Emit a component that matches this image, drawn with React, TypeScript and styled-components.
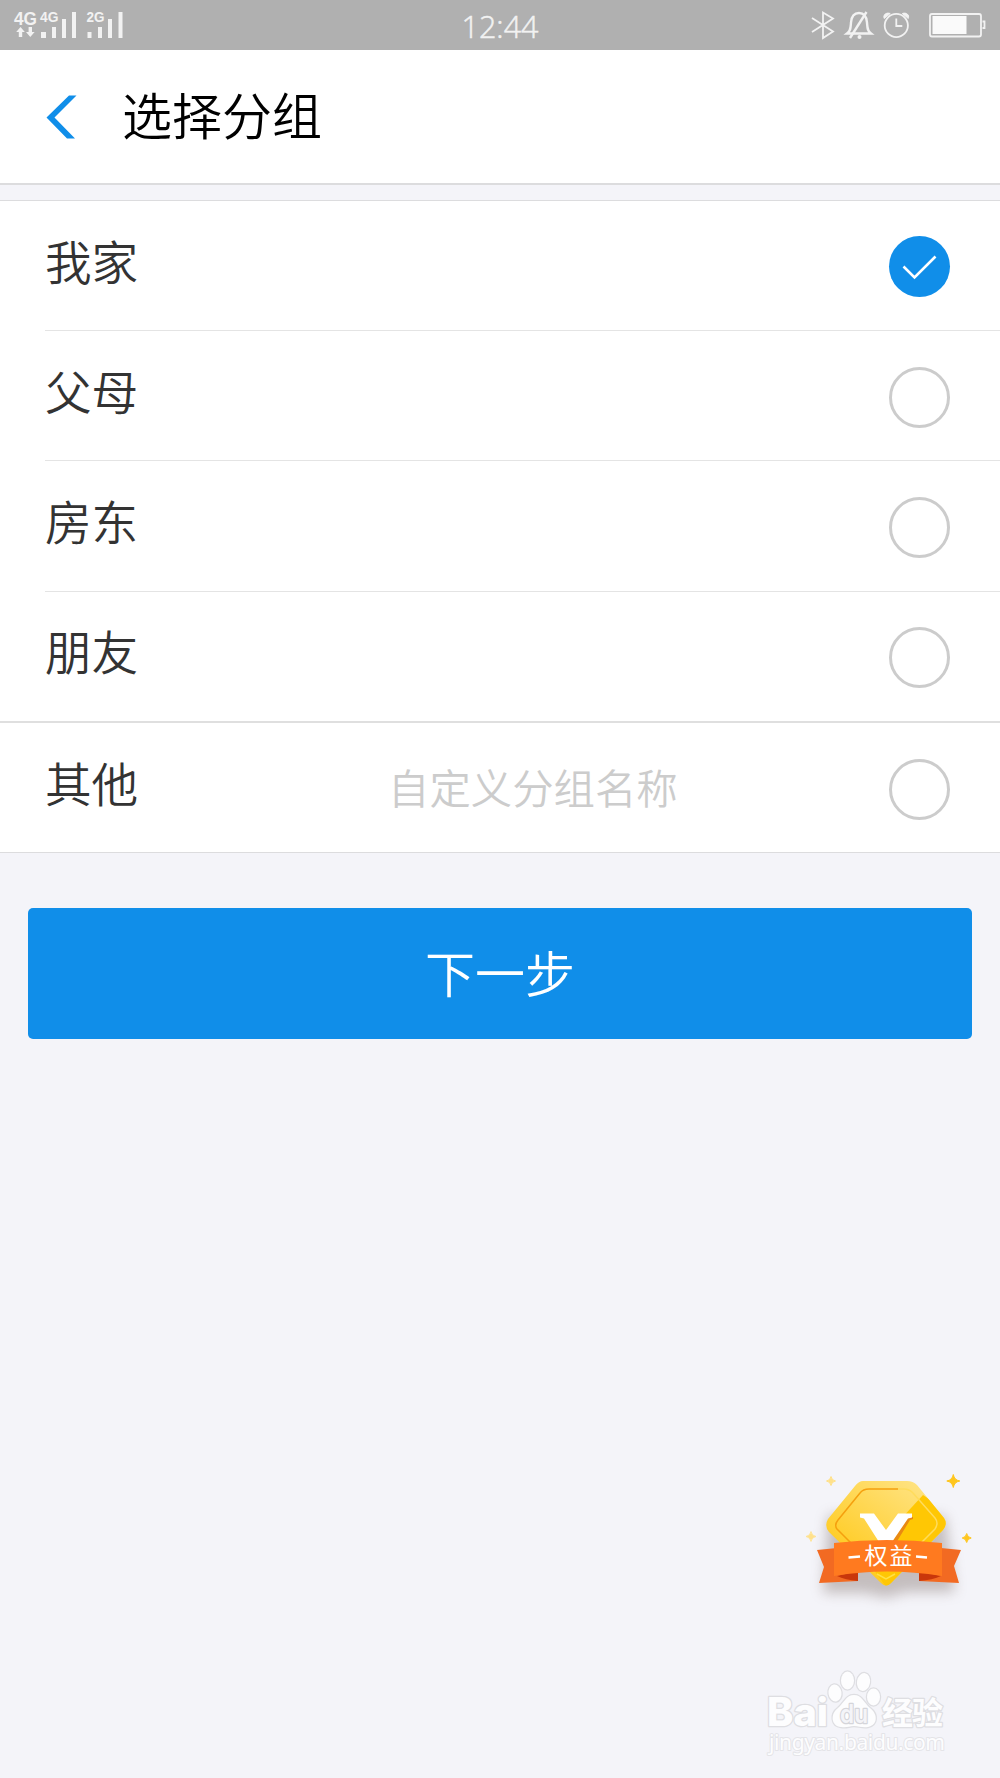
import React, { useState } from "react";
import styled, { createGlobalStyle } from "styled-components";

const BLUE = "#108ee9";
const PAGE = "#f4f4f9";
const CJK = '"Noto Sans CJK SC", "Noto Sans", sans-serif';

const GlobalStyle = createGlobalStyle`
  * { box-sizing: border-box; }
  body {
    margin: 0;
    background: ${PAGE};
    font-family: ${CJK};
    font-weight: 350;
  }
`;

const Screen = styled.div`
  position: relative;
  display: flex;
  flex-direction: column;
  width: 1000px;
  height: 1778px;
  overflow: hidden;
  background: ${PAGE};
`;

const StatusBar = styled.div`
  display: grid;
  grid-template-columns: 1fr auto 1fr;
  align-items: center;
  flex: none;
  height: 50px;
  background: #b0b0b0;
`;

const Clock = styled.time`
  font: 350 30.5px/50px "Open Sans", "Noto Sans", sans-serif;
  color: #f2f2f2;
  -webkit-text-stroke: 0.5px #f2f2f2;
  padding-top: 1px;
  height: 50px;
`;

const Icon = styled.svg<{ $end?: boolean }>`
  display: block;
  justify-self: ${(p) => (p.$end ? "end" : "start")};
`;

const Header = styled.header`
  display: flex;
  align-items: center;
  flex: none;
  height: 135px;
  padding: 0 0 0 46px;
  background: #fff;
  border-bottom: 2px solid #dcdcde;
`;

const BackButton = styled.button`
  flex: none;
  width: 76px;
  height: 60px;
  padding: 0;
  border: 0;
  background: none;
`;

const Title = styled.h1`
  margin: 0 0 7px;
  font-size: 50px;
  line-height: 70px;
  font-weight: 350;
  color: #000;
`;

const List = styled.ul`
  flex: none;
  margin: 15px 0 0;
  padding: 0;
  list-style: none;
  background: #fff;
  border-top: 1px solid #dcdcde;
  border-bottom: 1px solid #dcdcde;
`;

const Row = styled.li<{ $divider: "none" | "inset" | "full" }>`
  display: grid;
  grid-template-columns: 343px 1fr 61px;
  align-items: center;
  height: ${(p) => (p.$divider === "none" ? 129 : p.$divider === "full" ? 131 : 130.4)}px;
  margin-left: ${(p) => (p.$divider === "inset" ? 45 : 0)}px;
  padding: 0 50px 0 ${(p) => (p.$divider === "inset" ? 0 : 45)}px;
  border-top: ${(p) =>
    p.$divider === "none" ? "0" : p.$divider === "inset" ? "1px solid #e4e4e4" : "2px solid #dfdfdf"};
`;

const Label = styled.span`
  margin-bottom: 12px;
  font-size: 46.6px;
  line-height: 60px;
  color: #333;
`;

const NameInput = styled.input`
  width: 300px;
  height: 60px;
  margin-bottom: 4px;
  padding: 0;
  border: 0;
  outline: 0;
  background: none;
  font: 350 41.4px/60px ${CJK};
  &::placeholder { color: #ccc; opacity: 1; }
`;

const Radio = styled.button<{ $on: boolean }>`
  grid-column: 3;
  display: flex;
  width: 61px;
  height: 61px;
  margin-top: ${(p) => (p.$on ? 2 : 3)}px;
  padding: 0;
  border: ${(p) => (p.$on ? "0" : "3px solid #ccc")};
  border-radius: 50%;
  background: ${(p) => (p.$on ? BLUE : "#fff")};
`;

const NextButton = styled.button`
  flex: none;
  height: 131px;
  margin: 55px 28px 0;
  padding: 0 0 5px;
  border: 0;
  border-radius: 5px;
  background: ${BLUE};
  color: #fff;
  font: 350 50px/70px ${CJK};
`;

const FloatingBadge = styled.svg`
  position: absolute;
  left: 780px;
  top: 1450px;
`;

const Watermark = styled.svg`
  position: absolute;
  left: 750px;
  top: 1650px;
`;

function Signals() {
  return (
    <Icon width="140" height="50" fill="#f2f2f2" fontFamily="Liberation Sans" fontWeight="700">
      <text x="14" y="25" fontSize="18" textLength="23" lengthAdjust="spacingAndGlyphs">4G</text>
      <text x="40" y="22" fontSize="15" textLength="18.5" lengthAdjust="spacingAndGlyphs">4G</text>
      <text x="86.5" y="22" fontSize="15" textLength="18" lengthAdjust="spacingAndGlyphs">2G</text>
      <path d="M20.5 27l4.3 5h-2.6v5h-3.4v-5h-2.6zM30.3 37l-4.3-5h2.6v-5h3.4v5h2.6z" />
      <path d="M41 32h5v6h-5zM52 27h4v11h-4zM62 19h4v19h-4zM72 12h4v26h-4z" />
      <path d="M87.500 32h4v6h-4zM98 27h4v11h-4zM108 19h4v19h-4zM118.500 12h4v26h-4z" />
    </Icon>
  );
}

function StatusIcons() {
  return (
    <Icon $end width="200" height="50" fill="none" stroke="#f2f2f2" strokeWidth="1.8">
      <path d="M12 18l21 13.500-10 6.500V12.500l10 6L12 32" />
      <path d="M47 33.500h24c-4-3-3.500-6-4-11-.5-6-3.500-9.500-8-9.500s-7.500 3.500-8 9.500c-.5 5 0 8-4 11z" strokeWidth="2.4" />
      <path d="M50 38L66.500 12" strokeWidth="2.4" />
      <circle cx="59.500" cy="37" r="2" fill="#f2f2f2" stroke="none" />
      <circle cx="96.300" cy="25.500" r="11.600" />
      <path d="M96.300 18.500v7.500h6" />
      <path d="M84.200 18.500c-1.500-3.500 2-6.500 6-5zM108.300 18.500c1.500-3.500-2-6.500-6-5z" fill="#f2f2f2" strokeWidth="1" />
      <rect x="130" y="14" width="51" height="22.500" rx="2" />
      <rect x="132.500" y="16" width="34" height="18" fill="#fafafa" stroke="none" />
      <path d="M182.500 21.500h2v6.500h-2" />
    </Icon>
  );
}

const star = (x: number, y: number, r: number) =>
  `M${x} ${y - r}Q${x + r * 0.15} ${y - r * 0.15} ${x + r} ${y}Q${x + r * 0.15} ${y + r * 0.15} ${x} ${y + r}Q${x - r * 0.15} ${y + r * 0.15} ${x - r} ${y}Q${x - r * 0.15} ${y - r * 0.15} ${x} ${y - r}Z`;

function BenefitsBadge() {
  return (
    <FloatingBadge width="220" height="170">
      <defs>
        <linearGradient id="gold" x1="0" y1="1" x2="0.8" y2="0">
          <stop offset="0.25" stopColor="#ffca1c" />
          <stop offset="1" stopColor="#ffe58b" />
        </linearGradient>
        <filter id="soft" x="-20%" y="-20%" width="140%" height="150%">
          <feGaussianBlur stdDeviation="6.5" />
        </filter>
        <clipPath id="gem">
          <path d="M83 31H127Q133 31 137 35L164 68Q168 74 163 80L111 133Q106 138 101 133L49 82Q44 76 48 69L75 36Q79 31 83 31Z" />
        </clipPath>
      </defs>
      <path d="M48 65L165 66 175 142H126L106 148 85 143H43Z" fill="#776660" opacity=".38" filter="url(#soft)" />
      <g clipPath="url(#gem)">
        <path d="M40 25h132v120H40z" fill="url(#gold)" />
        <path d="M143 45L85 108l25 34L172 90V65z" fill="#ffc704" />
      </g>
      <path d="M73 95L57 79Q54 75 58 70L80 43Q83 39 89 39H118" fill="none" stroke="#f5a00e" strokeWidth="1.500" />
      <path d="M118 39H124Q129 39 133 43L155 68Q159 73 155 79L140 94" fill="none" stroke="#ffdc5c" strokeWidth="1.500" />
      <path d="M97 124l9 5 9-5" fill="none" stroke="#ffe047" strokeWidth="1.500" />
      <path d="M120 67H133V69L130 70L116 93H109L122 71z" fill="#e98a12" />
      <path d="M80 63.500H94L106 80L118 63.500H132V67.500L128 68.500L112 92H99L84 68.500L80 67.500Z" fill="#fff" />
      <path d="M37 100L57 98V124L78 120V131L39 133L44 117Z" fill="#f26a22" />
      <path d="M161 98L181 100 174 116 179 133 139 131V120L161 124Z" fill="#f26a22" />
      <path d="M57 126L78 121V131Q65 130 57 126ZM161 126L139 121V131Q153 130 161 126Z" fill="#c9370b" />
      <path d="M54 93Q106 87 162 93V126Q106 117 54 126Z" fill="#ff7a1f" />
      <path d="M68.500 107.500L80 106.500M136 106.500L147 107.500" stroke="#fff" strokeWidth="2.400" />
      <text x="84.500" y="114" fill="#fff" fontFamily="Noto Sans CJK SC" fontSize="23" fontWeight="400" textLength="48">权益</text>
      <path d={star(173.300, 31, 6.500)} fill="#ffc61d" stroke="#ffc61d" />
      <path d={star(186.700, 88, 4.500)} fill="#ffc61d" stroke="#ffc61d" />
      <path d={star(51, 31, 4.500)} fill="#ffe18b" stroke="#ffe18b" />
      <path d={star(31, 86.500, 5)} fill="#ffe18b" stroke="#ffe18b" strokeWidth=".8" />
    </FloatingBadge>
  );
}

function BaiduMark() {
  return (
    <Watermark width="220" height="128" fill="#fdfdfe" stroke="#dedee2" strokeWidth="2.500" paintOrder="stroke" strokeLinejoin="round">
      <text x="17" y="76" fontFamily="Inter" fontWeight="800" fontSize="39" textLength="61" lengthAdjust="spacingAndGlyphs">Bai</text>
      <ellipse cx="85" cy="43" rx="6.500" ry="8.500" transform="rotate(-8 85 43)" />
      <ellipse cx="97.500" cy="30.500" rx="6.500" ry="9" />
      <ellipse cx="113.500" cy="32" rx="6.500" ry="9" transform="rotate(10 113.500 32)" />
      <ellipse cx="123.500" cy="47" rx="6.500" ry="8.500" />
      <path d="M104 45C96 45 94 53 88 58C80 64 81 76 91 77C97 78 99 76 104 76C109 76 112 78 118 77C128 75 128 64 120 58C114 53 112 45 104 45Z" />
      <text x="90" y="73" fontFamily="Inter" fontWeight="600" fontSize="25" textLength="28" lengthAdjust="spacingAndGlyphs" fill="#f4f4f8" stroke="#d5d5da">du</text>
      <text x="132" y="74" fontFamily="Noto Sans CJK SC" fontWeight="700" fontSize="31" textLength="61">经验</text>
      <text x="19" y="100" fontFamily="Noto Sans" fontWeight="400" fontSize="21" textLength="176" strokeWidth="2" stroke="#e4e4e8">jingyan.baidu.com</text>
    </Watermark>
  );
}

const groups = ["我家", "父母", "房东", "朋友", "其他"];

export default function App() {
  const [selected, setSelected] = useState(0);
  return (
    <Screen>
      <GlobalStyle />
      <StatusBar>
        <Signals />
        <Clock>12:44</Clock>
        <StatusIcons />
      </StatusBar>
      <Header>
        <BackButton aria-label="返回">
          <Icon width="40" height="60">
            <path d="M23 8.500H30.500L8.500 30.500L29 51.500H21L.5 30.500Z" fill={BLUE} />
          </Icon>
        </BackButton>
        <Title>选择分组</Title>
      </Header>
      <List>
        {groups.map((name, i) => (
          <Row key={name} $divider={i === 0 ? "none" : i === 4 ? "full" : "inset"}>
            <Label>{name}</Label>
            {i === 4 && <NameInput placeholder="自定义分组名称" />}
            <Radio $on={i === selected} aria-label={name} onClick={() => setSelected(i)}>
              {i === selected && (
                <Icon width="61" height="61" fill="none" stroke="#fff" strokeWidth="2.600">
                  <path d="M14.500 30.500L25.500 41.500L46.500 20.500" />
                </Icon>
              )}
            </Radio>
          </Row>
        ))}
      </List>
      <NextButton>下一步</NextButton>
      <BenefitsBadge />
      <BaiduMark />
    </Screen>
  );
}
